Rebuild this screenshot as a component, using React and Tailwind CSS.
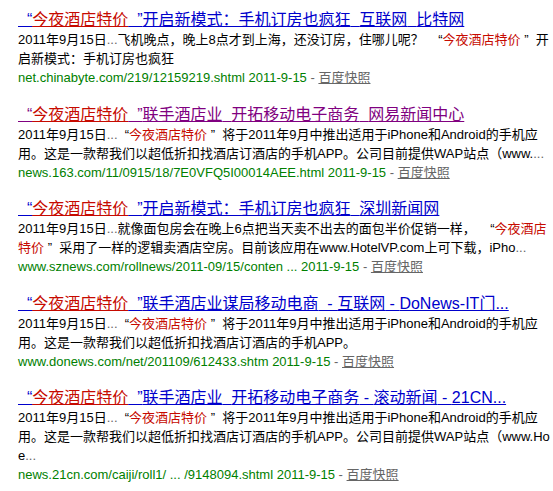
const NB = '\u00a0'

function Red({ children }) {
  return <span className="text-[#c60a00]">{children}</span>
}

function Dots() {
  return <span className="text-[#666666]">...</span>
}

function Title({ visited, children }) {
  const color = visited ? 'text-[#800080]' : 'text-[#0000cc]'
  return (
    <div className="h-[20px] text-[16px] leading-[20px] whitespace-nowrap">
      <a className={`${color} underline cursor-pointer`}>
        {NB + NB + '“'}
        <span className="text-[#c60a00] underline">今夜酒店特价</span>
        {NB + NB + '”'}
        {children}
      </a>
    </div>
  )
}

function Line({ children }) {
  return (
    <div className="h-[19px] text-[13px] leading-[19px] whitespace-nowrap text-black">
      {children}
    </div>
  )
}

function Url({ children }) {
  return (
    <Line>
      <span className="text-[#008000]">{children} 2011-9-15 </span>
      <span className="text-[#666666]">- </span>
      <a className="text-[#666666] underline cursor-pointer">百度快照</a>
    </Line>
  )
}

const open = NB + NB + '“'
const close = NB + '”' + NB + NB
const dash = NB + NB + '- '

export default function App() {
  return (
    <div className="w-[553px] h-[491px] overflow-hidden bg-white pl-[18px] pt-[10px] font-['Liberation_Sans','Noto_Sans_CJK_SC',sans-serif]">
      <div className="flex flex-col gap-[17.5px]">
        <div>
          <Title>开启新模式：手机订房也疯狂{NB + NB}互联网{NB + NB}比特网</Title>
          <Line>
            2011年9月15日<Dots />飞机晚点，晚上8点才到上海，还没订房，住哪儿呢？
            {NB.repeat(4) + '“'}
            <Red>今夜酒店特价</Red>
            {NB + '”' + NB + NB}开
          </Line>
          <Line>启新模式：手机订房也疯狂</Line>
          <Url>net.chinabyte.com/219/12159219.shtml</Url>
        </div>

        <div>
          <Title visited>联手酒店业{NB + NB}开拓移动电子商务{NB + NB}网易新闻中心</Title>
          <Line>
            2011年9月15日<Dots />{open}
            <Red>今夜酒店特价</Red>
            {close}将于2011年9月中推出适用于iPhone和Android的手机应
          </Line>
          <Line>
            用。这是一款帮我们以超低折扣找酒店订酒店的手机APP。公司目前提供WAP站点（www.<Dots />
          </Line>
          <Url>news.163.com/11/0915/18/7E0VFQ5I00014AEE.html</Url>
        </div>

        <div>
          <Title>开启新模式：手机订房也疯狂{NB + NB}深圳新闻网</Title>
          <Line>
            2011年9月15日<Dots />就像面包房会在晚上6点把当天卖不出去的面包半价促销一样，
            {NB.repeat(4) + '“'}
            <Red>今夜酒店</Red>
          </Line>
          <Line>
            <Red>特价</Red>
            {close}采用了一样的逻辑卖酒店空房。目前该应用在www.HotelVP.com上可下载，iPho
            <Dots />
          </Line>
          <Url>www.sznews.com/rollnews/2011-09/15/conten ...</Url>
        </div>

        <div>
          <Title>联手酒店业谋局移动电商{dash}互联网{NB + '- '}DoNews-IT门...</Title>
          <Line>
            2011年9月15日<Dots />{open}
            <Red>今夜酒店特价</Red>
            {close}将于2011年9月中推出适用于iPhone和Android的手机应
          </Line>
          <Line>用。这是一款帮我们以超低折扣找酒店订酒店的手机APP。</Line>
          <Url>www.donews.com/net/201109/612433.shtm</Url>
        </div>

        <div>
          <Title>联手酒店业{NB + NB}开拓移动电子商务{NB + '- '}滚动新闻{NB + '- '}21CN...</Title>
          <Line>
            2011年9月15日<Dots />{open}
            <Red>今夜酒店特价</Red>
            {close}将于2011年9月中推出适用于iPhone和Android的手机应
          </Line>
          <Line>
            用。这是一款帮我们以超低折扣找酒店订酒店的手机APP。公司目前提供WAP站点（www.Ho
          </Line>
          <Line>
            e<Dots />
          </Line>
          <Url>news.21cn.com/caiji/roll1/ ... /9148094.shtml</Url>
        </div>
      </div>
    </div>
  )
}
